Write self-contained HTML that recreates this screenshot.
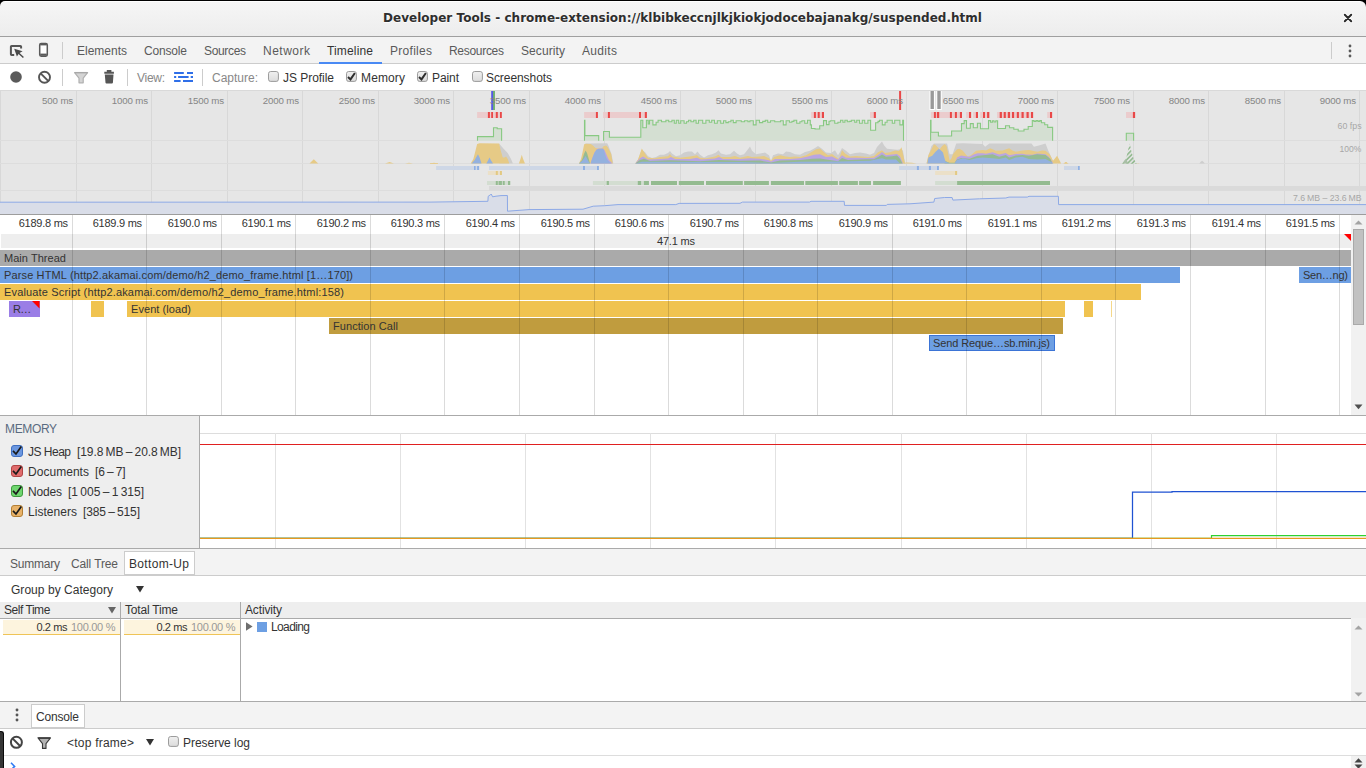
<!DOCTYPE html><html lang="en"><head><meta charset="utf-8"><title>Developer Tools</title><style>
*{box-sizing:border-box;margin:0;padding:0}
html,body{width:1366px;height:768px;overflow:hidden;background:#fff}
body{position:relative;font-family:"Liberation Sans","DejaVu Sans",sans-serif;font-size:12px;color:#333;-webkit-font-smoothing:antialiased}
.a{position:absolute;white-space:nowrap}
.t{position:absolute;white-space:nowrap;line-height:14px;height:14px}
svg{position:absolute;overflow:visible}
</style></head><body>
<div class="a" style="left:0;top:0;width:1366px;height:37px;background:#000"></div>
<div class="a" style="left:0;top:1px;width:1366px;height:35px;border-radius:5px 6px 0 0;background:linear-gradient(#fff 0,#fff 1px,#f5f5f5 1px,#f4f4f4 7px,#ededed 34px)"></div>
<div class="a" style="left:0;top:36px;width:1366px;height:1px;background:#9f9f9f"></div>
<div class="t" style="left:383px;top:10px;text-shadow:0 1px 0 rgba(255,255,255,0.85);font-family:'DejaVu Sans','Liberation Sans',sans-serif;font-weight:bold;font-size:12px;letter-spacing:0.028px;line-height:16px;height:16px;color:#2e2e2e">Developer Tools - chrome-extension://klbibkeccnjlkjkiokjodocebajanakg/suspended.html</div>
<svg style="left:1342px;top:12px" width="12" height="12" viewBox="1342 12 12 12"><path d="M1344.8 14.8L1351.2 21.2M1351.2 14.8L1344.8 21.2" stroke="#fff" stroke-width="3.8" stroke-linecap="round" fill="none" opacity="0.9"/><path d="M1344.8 14.8L1351.2 21.2M1351.2 14.8L1344.8 21.2" stroke="#2a2a2a" stroke-width="2" stroke-linecap="round" fill="none"/></svg>
<div class="a" style="left:0;top:37px;width:1366px;height:27px;background:#f3f3f3;border-bottom:1px solid #ccc"></div>
<svg style="left:0;top:36px" width="30" height="28" viewBox="0 36 30 28"><path d="M14.2 54.9H11.6Q10.9 54.9 10.9 54.2V46.6Q10.9 45.9 11.6 45.9H20.4Q21.1 45.9 21.1 46.6V48.6" fill="none" stroke="#555" stroke-width="2" /><path d="M14.2 48.8L22.6 51.3L19.6 52.9L23.9 57.1L22.9 58.1L18.6 53.9L16.9 56.4Z" fill="#4a4a4a"/></svg>
<svg style="left:38px;top:42px" width="11" height="16" viewBox="0 0 11 16"><rect x="1.7" y="1.6" width="7.6" height="12.6" rx="1.4" fill="#fff" stroke="#5a5a5a" stroke-width="1.5"/><rect x="2.2" y="1.8" width="6.6" height="1.6" fill="#5a5a5a"/><rect x="2.2" y="11.6" width="6.6" height="2.2" fill="#5a5a5a"/></svg>
<div class="a" style="left:62px;top:42px;width:1px;height:17px;background:#ccc"></div>
<div class="t" style="left:77px;top:44px;color:#5a5a5a;line-height:14px;height:14px;letter-spacing:-0.004px;">Elements</div>
<div class="t" style="left:144px;top:44px;color:#5a5a5a;line-height:14px;height:14px;letter-spacing:-0.172px;">Console</div>
<div class="t" style="left:204px;top:44px;color:#5a5a5a;line-height:14px;height:14px;letter-spacing:-0.339px;">Sources</div>
<div class="t" style="left:263px;top:44px;color:#5a5a5a;line-height:14px;height:14px;letter-spacing:0.497px;">Network</div>
<div class="t" style="left:327px;top:44px;color:#333;line-height:14px;height:14px;letter-spacing:0.156px;">Timeline</div>
<div class="t" style="left:390px;top:44px;color:#5a5a5a;line-height:14px;height:14px;letter-spacing:0.283px;">Profiles</div>
<div class="t" style="left:449px;top:44px;color:#5a5a5a;line-height:14px;height:14px;letter-spacing:-0.295px;">Resources</div>
<div class="t" style="left:521px;top:44px;color:#5a5a5a;line-height:14px;height:14px;letter-spacing:0.092px;">Security</div>
<div class="t" style="left:582px;top:44px;color:#5a5a5a;line-height:14px;height:14px;letter-spacing:0.328px;">Audits</div>
<div class="a" style="left:319px;top:62px;width:63px;height:2px;background:#4a8af4"></div>
<div class="a" style="left:1331px;top:42px;width:1px;height:17px;background:#ccc"></div>
<svg style="left:1348.4px;top:43.5px" width="4" height="14" viewBox="0 0 4 14"><circle cx="2" cy="2" r="1.4" fill="#5a5a5a"/><circle cx="2" cy="7" r="1.4" fill="#5a5a5a"/><circle cx="2" cy="12" r="1.4" fill="#5a5a5a"/></svg>
<div class="a" style="left:0;top:64px;width:1366px;height:26px;background:#fff"></div>
<svg style="left:0;top:64px" width="230" height="26" viewBox="0 64 230 26"><circle cx="16" cy="77" r="5.8" fill="#5a5a5a"/><circle cx="44.5" cy="77.3" r="5.5" fill="none" stroke="#555" stroke-width="1.9"/><path d="M40.6 73.4L48.4 81.2" stroke="#555" stroke-width="1.9"/><path d="M74.6 72.6H87.6L83.2 78.2V82.8H79V78.2Z" fill="#d4d4d4" stroke="#b0b0b0" stroke-width="1.2" stroke-linejoin="round"/><path d="M74.6 72.6H87.6" stroke="#a8a8a8" stroke-width="1.3"/><path d="M104.8 74.6H113.5L112.9 82.8Q112.8 83.6 112 83.6H106.4Q105.6 83.6 105.5 82.8ZM104.3 71.8H113.9V73.8H104.3ZM106.8 70.1H111.4V72H106.8Z" fill="#555"/><path d="M174.1 73H183.8M187 73H193M174.1 77H176.2M178.1 77H188.6M190.7 77H193M174.1 81H180.6M183 81H193" stroke="#2f6fe8" stroke-width="1.8" fill="none"/></svg>
<div class="a" style="left:62px;top:69px;width:1px;height:17px;background:#ccc"></div>
<div class="a" style="left:127px;top:69px;width:1px;height:17px;background:#ccc"></div>
<div class="a" style="left:202px;top:69px;width:1px;height:17px;background:#ccc"></div>
<div class="t" style="left:137px;top:71px;color:#888;line-height:14px;height:14px;letter-spacing:-0.285px;">View:</div>
<div class="t" style="left:212px;top:71px;color:#888;line-height:14px;height:14px;letter-spacing:-0.004px;">Capture:</div>
<svg width="0" height="0" style="left:0;top:0"><defs><linearGradient id="cbg" x1="0" y1="0" x2="0" y2="1"><stop offset="0" stop-color="#f0f0f0"/><stop offset="1" stop-color="#dcdcdc"/></linearGradient></defs></svg>
<svg style="left:268.2px;top:71.1px" width="11.9" height="12.9" viewBox="0 0 11.9 12.9"><rect x="0.5" y="1.2" width="9.9" height="9.9" rx="2.2" fill="#c8c8c8" opacity="0.5"/><rect x="0.5" y="0.5" width="9.9" height="9.9" rx="2.2" fill="url(#cbg)" stroke="#9c9c9c" stroke-width="1"/></svg>
<div class="t" style="left:283px;top:71px;color:#333;line-height:14px;height:14px;letter-spacing:-0.040px;">JS Profile</div>
<svg style="left:346.4px;top:71.1px" width="11.9" height="12.9" viewBox="0 0 11.9 12.9"><rect x="0.5" y="1.2" width="9.9" height="9.9" rx="2.2" fill="#c8c8c8" opacity="0.5"/><rect x="0.5" y="0.5" width="9.9" height="9.9" rx="2.2" fill="url(#cbg)" stroke="#9c9c9c" stroke-width="1"/><path d="M2 6L4.5 8.4L8.9 2" fill="none" stroke="#2e2e2e" stroke-width="2"/></svg>
<div class="t" style="left:361px;top:71px;color:#333;line-height:14px;height:14px;letter-spacing:0.131px;">Memory</div>
<svg style="left:417.4px;top:71.1px" width="11.9" height="12.9" viewBox="0 0 11.9 12.9"><rect x="0.5" y="1.2" width="9.9" height="9.9" rx="2.2" fill="#c8c8c8" opacity="0.5"/><rect x="0.5" y="0.5" width="9.9" height="9.9" rx="2.2" fill="url(#cbg)" stroke="#9c9c9c" stroke-width="1"/><path d="M2 6L4.5 8.4L8.9 2" fill="none" stroke="#2e2e2e" stroke-width="2"/></svg>
<div class="t" style="left:432px;top:71px;color:#333;line-height:14px;height:14px;letter-spacing:-0.090px;">Paint</div>
<svg style="left:471.6px;top:71.1px" width="11.9" height="12.9" viewBox="0 0 11.9 12.9"><rect x="0.5" y="1.2" width="9.9" height="9.9" rx="2.2" fill="#c8c8c8" opacity="0.5"/><rect x="0.5" y="0.5" width="9.9" height="9.9" rx="2.2" fill="url(#cbg)" stroke="#9c9c9c" stroke-width="1"/></svg>
<div class="t" style="left:486px;top:71px;color:#333;line-height:14px;height:14px;letter-spacing:-0.070px;">Screenshots</div>
<div class="a" style="left:0;top:90px;width:1366px;height:125px;background:#e6e6e6"></div>
<svg style="left:0;top:90px" width="1366" height="125" viewBox="0 90 1366 125">
<rect x="0.0" y="90" width="1" height="124" fill="#d8d8d8"/>
<rect x="76.0" y="90" width="1" height="124" fill="#d8d8d8"/>
<rect x="151.0" y="90" width="1" height="124" fill="#d8d8d8"/>
<rect x="227.0" y="90" width="1" height="124" fill="#d8d8d8"/>
<rect x="302.0" y="90" width="1" height="124" fill="#d8d8d8"/>
<rect x="378.0" y="90" width="1" height="124" fill="#d8d8d8"/>
<rect x="453.0" y="90" width="1" height="124" fill="#d8d8d8"/>
<rect x="529.0" y="90" width="1" height="124" fill="#d8d8d8"/>
<rect x="604.0" y="90" width="1" height="124" fill="#d8d8d8"/>
<rect x="680.0" y="90" width="1" height="124" fill="#d8d8d8"/>
<rect x="755.0" y="90" width="1" height="124" fill="#d8d8d8"/>
<rect x="831.0" y="90" width="1" height="124" fill="#d8d8d8"/>
<rect x="906.0" y="90" width="1" height="124" fill="#d8d8d8"/>
<rect x="982.0" y="90" width="1" height="124" fill="#d8d8d8"/>
<rect x="1057.0" y="90" width="1" height="124" fill="#d8d8d8"/>
<rect x="1133.0" y="90" width="1" height="124" fill="#d8d8d8"/>
<rect x="1208.0" y="90" width="1" height="124" fill="#d8d8d8"/>
<rect x="1284.0" y="90" width="1" height="124" fill="#d8d8d8"/>
<rect x="1359.0" y="90" width="1" height="124" fill="#d8d8d8"/>
<rect x="0" y="140" width="1366" height="1" fill="#dddddd"/>
<rect x="0" y="163" width="1366" height="1" fill="#dddddd"/>
<rect x="0" y="190" width="1366" height="1" fill="#dddddd"/>
<rect x="489" y="186" width="877" height="4.5" fill="#dadada"/>
<polygon points="0,214 0,202.2 430,202.1 487.9,201.3 488.2,196.3 490.4,194.8 491.2,194.0 492.6,196.8 496,196.2 501,195.6 507.4,195.5 507.5,211.2 529,209.6 583,209.2 593.2,206.2 604.7,205.7 618,204.6 675.8,204.6 679.1,203.4 740,203.3 742.5,202.1 809.5,202.1 811,201.3 844.2,201.3 844.5,205.4 886.4,205.4 887.2,204.4 910,203.8 933.9,202.1 934.7,198.5 944.6,197.5 952.1,197.5 952.9,200.1 979.4,198.8 1005.8,198 1009,197.1 1027.3,197.1 1029,196.3 1058.4,196.3 1058.6,204.6 1366,204.6 1366,214" fill="#d9dde8"/>
<polyline points="0,202.2 430,202.1 487.9,201.3 488.2,196.3 490.4,194.8 491.2,194.0 492.6,196.8 496,196.2 501,195.6 507.4,195.5 507.5,211.2 529,209.6 583,209.2 593.2,206.2 604.7,205.7 618,204.6 675.8,204.6 679.1,203.4 740,203.3 742.5,202.1 809.5,202.1 811,201.3 844.2,201.3 844.5,205.4 886.4,205.4 887.2,204.4 910,203.8 933.9,202.1 934.7,198.5 944.6,197.5 952.1,197.5 952.9,200.1 979.4,198.8 1005.8,198 1009,197.1 1027.3,197.1 1029,196.3 1058.4,196.3 1058.6,204.6 1366,204.6" fill="none" stroke="#8da9e6" stroke-width="1"/>
<rect x="477.1" y="112" width="24.7" height="6" fill="#ebcccd"/>
<rect x="584.1" y="112" width="13.8" height="6" fill="#ebcccd"/>
<rect x="603.1" y="112" width="43.8" height="6" fill="#ebcccd"/>
<rect x="811.1" y="112" width="12.9" height="6" fill="#ebcccd"/>
<rect x="870" y="112" width="5.9" height="6" fill="#ebcccd"/>
<rect x="930.9" y="112" width="31.1" height="6" fill="#ebcccd"/>
<rect x="966.1" y="112" width="5.0" height="6" fill="#ebcccd"/>
<rect x="973.1" y="112" width="4.9" height="6" fill="#ebcccd"/>
<rect x="980.2" y="112" width="9.1" height="6" fill="#ebcccd"/>
<rect x="997" y="112" width="36.1" height="6" fill="#ebcccd"/>
<rect x="1047.2" y="112" width="4.9" height="6" fill="#ebcccd"/>
<rect x="1126" y="112" width="9.1" height="6" fill="#ebcccd"/>
<rect x="487.9" y="112" width="2.0" height="6" fill="#e94848"/>
<rect x="491.2" y="112" width="1.8" height="6" fill="#e94848"/>
<rect x="495.8" y="112" width="2.0" height="6" fill="#e94848"/>
<rect x="500" y="112" width="1.8" height="6" fill="#e94848"/>
<rect x="595.9" y="112" width="2.0" height="6" fill="#e94848"/>
<rect x="607.9" y="112" width="2.0" height="6" fill="#e94848"/>
<rect x="639" y="112" width="2" height="6" fill="#e94848"/>
<rect x="644.8" y="112" width="2.1" height="6" fill="#e94848"/>
<rect x="813.9" y="112" width="2.0" height="6" fill="#e94848"/>
<rect x="817.7" y="112" width="2.0" height="6" fill="#e94848"/>
<rect x="821.9" y="112" width="2.1" height="6" fill="#e94848"/>
<rect x="873.8" y="112" width="2.1" height="6" fill="#e94848"/>
<rect x="933.9" y="112" width="2.0" height="6" fill="#e94848"/>
<rect x="936.9" y="112" width="2.3" height="6" fill="#e94848"/>
<rect x="949.9" y="112" width="2.0" height="6" fill="#e94848"/>
<rect x="954.9" y="112" width="2.0" height="6" fill="#e94848"/>
<rect x="959.9" y="112" width="2.1" height="6" fill="#e94848"/>
<rect x="969" y="112" width="2.1" height="6" fill="#e94848"/>
<rect x="975.9" y="112" width="2.1" height="6" fill="#e94848"/>
<rect x="983" y="112" width="2" height="6" fill="#e94848"/>
<rect x="987.1" y="112" width="2.2" height="6" fill="#e94848"/>
<rect x="999.7" y="112" width="2.2" height="6" fill="#e94848"/>
<rect x="1003.7" y="112" width="2.1" height="6" fill="#e94848"/>
<rect x="1007.8" y="112" width="2.2" height="6" fill="#e94848"/>
<rect x="1012" y="112" width="2.1" height="6" fill="#e94848"/>
<rect x="1016.8" y="112" width="2.1" height="6" fill="#e94848"/>
<rect x="1021.5" y="112" width="2.2" height="6" fill="#e94848"/>
<rect x="1026.5" y="112" width="2.2" height="6" fill="#e94848"/>
<rect x="1031" y="112" width="2.1" height="6" fill="#e94848"/>
<rect x="1050" y="112" width="2.1" height="6" fill="#e94848"/>
<rect x="1132.9" y="112" width="2.2" height="6" fill="#e94848"/>
<path d="M477.5,140.8V136.6H493.5V127.8H497.2V128.8H501.6V140.8Z" fill="#d4dfd2" stroke="none"/>
<path d="M477.5,140.8V136.6H493.5V127.8H497.2V128.8H501.6V140.8" fill="none" stroke="#88c982" stroke-width="1.1"/>
<path d="M584.5,140.8V120.2H584.9V135.6H598.7V140.8Z" fill="#d4dfd2" stroke="none"/>
<path d="M584.5,140.8V120.2H584.9V135.6H598.7V140.8" fill="none" stroke="#88c982" stroke-width="1.1"/>
<path d="M603.6,140.8V131.5H609.4V137.3H640.8V120.2H642.8V127.7H646.4V120.2H648.2V124.0H649.5V120.3H652.9V124.9H656.1V122.2H658.1V120.3H661.5V121.8H663.9V121.8H665.9V120.3H668.7V121.8H671.9V120.3H674.3V123.2H676.3V120.3H678.7V123.2H680.7V120.8H684.1V123.2H686.5V121.8H688.5V120.3H690.9V121.8H693.7V120.3H696.1V123.2H698.5V120.3H702.7V123.2H705.9V120.3H709.3V122.2H711.7V120.3H714.5V123.2H717.3V120.8H720.7V123.2H723.5V120.8H725.9V122.6H728.3V121.8H730.9V120.3H733.3V122.6H736.1V120.8H741.3V121.8H744.5V120.8H747.9V121.8H749.9V120.8H753.3V124.9H756.1V120.3H759.5V122.6H762.7V121.4H765.3V120.3H767.7V122.2H770.5V120.8H774.7V121.8H777.9V121.8H780.5V120.8H783.3V124.9H786.1V120.8H789.5V122.2H791.9V121.4H793.9V120.3H796.7V123.2H799.9V121.8H801.9V120.8H804.7V123.2H807.5V120.3H810.3V124.9H811.4V128.5H815V129.0H819.7V125.7H823.5V120.6H826.5V124.6H829V121.2H830.5V120.8H834.7V123.2H837.9V122.2H840.5V120.3H842.9V122.2H844.9V120.3H847.3V121.8H849.3V121.4H851.3V120.3H854.7V122.2H856.7V120.3H859.5V123.2H862.3V120.3H864.7V123.2H867.9V120.3H870.6V130.2H875.6V122.8H878V121.4H879.5V120.3H882.3V124.9H885.1V122.2H887.1V120.3H892.3V123.2H894.7V120.3H899.9V124.9H902.7V120.3H903.5V140.8Z" fill="#d4dfd2" stroke="none"/>
<path d="M603.6,140.8V131.5H609.4V137.3H640.8V120.2H642.8V127.7H646.4V120.2H648.2V124.0H649.5V120.3H652.9V124.9H656.1V122.2H658.1V120.3H661.5V121.8H663.9V121.8H665.9V120.3H668.7V121.8H671.9V120.3H674.3V123.2H676.3V120.3H678.7V123.2H680.7V120.8H684.1V123.2H686.5V121.8H688.5V120.3H690.9V121.8H693.7V120.3H696.1V123.2H698.5V120.3H702.7V123.2H705.9V120.3H709.3V122.2H711.7V120.3H714.5V123.2H717.3V120.8H720.7V123.2H723.5V120.8H725.9V122.6H728.3V121.8H730.9V120.3H733.3V122.6H736.1V120.8H741.3V121.8H744.5V120.8H747.9V121.8H749.9V120.8H753.3V124.9H756.1V120.3H759.5V122.6H762.7V121.4H765.3V120.3H767.7V122.2H770.5V120.8H774.7V121.8H777.9V121.8H780.5V120.8H783.3V124.9H786.1V120.8H789.5V122.2H791.9V121.4H793.9V120.3H796.7V123.2H799.9V121.8H801.9V120.8H804.7V123.2H807.5V120.3H810.3V124.9H811.4V128.5H815V129.0H819.7V125.7H823.5V120.6H826.5V124.6H829V121.2H830.5V120.8H834.7V123.2H837.9V122.2H840.5V120.3H842.9V122.2H844.9V120.3H847.3V121.8H849.3V121.4H851.3V120.3H854.7V122.2H856.7V120.3H859.5V123.2H862.3V120.3H864.7V123.2H867.9V120.3H870.6V130.2H875.6V122.8H878V121.4H879.5V120.3H882.3V124.9H885.1V122.2H887.1V120.3H892.3V123.2H894.7V120.3H899.9V124.9H902.7V120.3H903.5V140.8" fill="none" stroke="#88c982" stroke-width="1.1"/>
<path d="M930.6,140.8V120.2H931V132.3H938.4V136H951.6V131H961.5V123.6H964.2V120.6H966.5V128.2H970.3V123.6H973.3V127.7H977.4V123.2H980.5V128.7H988.5V120.6H990.6V122.2H992.4V120.8H994V122.0H995.8V120.8H997.6V128.5H1005.5V125.7H1009.5V127.7H1013.8V129.3H1018.2V131H1024V129.3H1028.2V126.5H1032.3V120.6H1034V121.4H1036V120.6H1038V121.4H1039.8V120.6H1041.4V122.7H1044.7V124.7H1047.7V127.4H1052.6V140.8Z" fill="#d4dfd2" stroke="none"/>
<path d="M930.6,140.8V120.2H931V132.3H938.4V136H951.6V131H961.5V123.6H964.2V120.6H966.5V128.2H970.3V123.6H973.3V127.7H977.4V123.2H980.5V128.7H988.5V120.6H990.6V122.2H992.4V120.8H994V122.0H995.8V120.8H997.6V128.5H1005.5V125.7H1009.5V127.7H1013.8V129.3H1018.2V131H1024V129.3H1028.2V126.5H1032.3V120.6H1034V121.4H1036V120.6H1038V121.4H1039.8V120.6H1041.4V122.7H1044.7V124.7H1047.7V127.4H1052.6V140.8" fill="none" stroke="#88c982" stroke-width="1.1"/>
<path d="M1126.3,140.8V133.3H1133.6V140.8Z" fill="#d4dfd2" stroke="none"/>
<path d="M1126.3,140.8V133.3H1133.6V140.8" fill="none" stroke="#88c982" stroke-width="1.1"/>
<polygon points="309.5,163.6 309.5,163.6 313.8,159.2 318.2,163.6 318.2,163.6" fill="#e6ca86"/>
<polygon points="385,163.6 385,163.6 389.6,162 394,163.6 394,163.6" fill="#e6ca86"/>
<polygon points="405,163.6 405,163.6 409,162.8 413,163.6 413,163.6" fill="#e6ca86"/>
<polygon points="430,163.6 430,163.6 434,162.8 438,163.6 438,163.6" fill="#e6ca86"/>
<polygon points="499.13,163.6 499.13,143.4 503.59,148.86 507.72,152.99 511.03,159.11 513.02,163.74 513.02,163.6" fill="#cecece"/>
<polygon points="470.52,163.6 470.52,163.74 473.33,159.11 475.48,150.84 477.13,143.9 479.61,143.23 499.13,143.56 500.78,150.84 502.76,157.46 504.42,157.46 506.07,156.46 507.72,159.11 509.38,163.74 509.38,163.6" fill="#e6ca86"/>
<polygon points="471.34,163.6 471.34,163.74 474.65,159.94 477.96,154.15 479.61,157.46 481.6,163.74 481.6,163.6" fill="#94b1de"/>
<polygon points="486.23,163.6 486.23,163.74 487.88,160.76 489.53,157.46 491.19,160.76 493.17,163.74 493.17,163.6" fill="#94b1de"/>
<polygon points="518.8,163.6 518.8,163.74 520.46,159.11 521.78,154.64 523.1,159.11 525.09,163.74 525.09,163.6" fill="#e6ca86"/>
<polygon points="584.5,163.6 584.5,144.2 586,143.4 607.2,143.3 608.6,146 610,150 611.5,154 613.3,163.6 613.3,163.6" fill="#cecece"/>
<polygon points="579,163.6 579,163.6 581,159 582.6,152 584.1,144.6 585.5,143.8 590.7,144 593,145.5 595.5,148 598,148.6 602,148.2 603.5,146.2 606.1,145.4 607.6,147 609.2,150 611.2,154 612.8,163.6 612.8,163.6" fill="#e6ca86"/>
<polygon points="590.5,163.6 590.5,163.6 592.5,157.5 594.5,152.5 596.5,149.5 598.5,148.6 603,148.4 604.5,150 606,153.5 607.5,157 609,160 611,162 612.5,163.6 612.5,163.6" fill="#b9a5e2"/>
<polygon points="579,163.6 579,163.6 582,160 584,154 585.6,150.5 587,153 588.5,158 590,163.6 590,163.6" fill="#95bb92"/>
<polygon points="579,163.6 579,163.6 582,161 584.3,158 585.6,156.1 587,158.5 588.6,161.5 590,163.6 590,163.6" fill="#94b1de"/>
<polygon points="590.5,163.6 590.5,163.6 592.5,157.8 594.5,152.8 596.5,149.8 598.5,148.9 603,148.7 604,150.5 605,154 606,157.5 607.5,160 609.5,162.3 611,163.6 611,163.6" fill="#94b1de"/>
<polygon points="635.3,163.6 635.3,163.6 638,159.64 641.5,150.29 645,151.94 648,156.34 652,157.99 656,156.89 660,154.69 664,154.69 668,153.04 670,151.06 672,153.59 676,156.34 680,155.24 684,152.49 688,151.39 692,151.39 695,154.14 697.5,151.39 700,154.69 704,157.44 708,155.24 712,154.14 716,152.49 718.5,150.29 721,153.59 726,154.69 730,154.14 734,150.84 737,153.59 740,155.24 744,154.14 748,149.19 750,146.44 752,150.84 756,154.14 760,153.59 765,152.49 769,155.24 771,160.74 773,155.24 778,153.59 783,154.14 786,151.39 790,151.94 795,154.14 800,154.69 805,151.94 810,150.84 815,148.09 818,145.89 822,148.64 826,152.49 831,153.04 835,150.29 838,155.24 840,151.94 842,148.09 846,150.84 850,154.14 855,153.04 860,152.49 866,153.59 870,154.69 874,153.04 877,146.99 880,143.69 882,141.49 884,145.34 887,148.64 892,149.19 897,149.74 901,149.19 903,150.84 905,163.6 905,163.6" fill="#cecece"/>
<polygon points="635.3,163.6 635.3,163.6 638,159.52 641.8,148.48 645,153.52 648,157.72 655,158.32 660,157.12 668,156.16 670,154.12 672,156.52 680,157.72 690,156.52 697,155.32 700,157.72 706,158.32 715,156.52 718.5,154.72 721,157.12 730,157.12 735,155.92 740,157.72 748,155.92 752,157.12 760,156.52 764,155.92 769,158.32 771,160.72 774,157.12 780,155.32 786,156.52 790,157.12 795,156.52 800,157.12 806,155.32 812,151.72 816,149.32 820,148.48 824,152.32 828,155.32 832,154.12 836,157.12 839,158.92 842,149.92 845,153.52 850,156.52 856,155.92 862,156.52 868,157.12 874,155.92 878,152.32 882,150.16 885,152.92 890,152.32 895,150.52 899,151.12 901.5,147.28 903.5,155.92 905,163.6 905,163.6" fill="#e6ca86"/>
<polygon points="635.3,163.6 635.3,163.6 640,158.35 643,156.48 648,159.6 660,158.98 668,158.6 671,157.1 675,158.98 690,158.98 697,157.73 701,159.6 715,158.6 719,157.1 723,158.98 740,158.98 750,158.35 760,158.73 769,160.23 771,161.48 775,158.98 790,158.98 800,158.35 808,156.48 814,154.85 820,154.35 826,157.1 832,156.48 838,159.6 842,155.23 846,157.73 856,157.73 866,158.1 874,157.73 879,154.6 882,152.1 886,155.23 892,154.6 897,153.98 900,156.48 903,163.6 903,163.6" fill="#b9a5e2"/>
<polygon points="635.3,163.6 635.3,163.6 640,159.97 644,158.72 650,160.97 670,160.22 700,161.22 719,159.97 740,160.72 760,160.6 771,162.47 780,160.6 800,159.97 812,158.72 820,158.47 828,159.72 838,161.22 842,158.1 848,159.97 866,159.35 874,159.35 879,156.47 882,154.47 886,156.85 892,156.22 897,155.6 900,158.72 902.5,163.6 902.5,163.6" fill="#95bb92"/>
<polygon points="635.3,163.6 635.3,163.6 642,161.64 700,161.92 740,161.92 771,162.9 800,161.64 840,161.5 870,160.8 878,159.12 882,158.14 886,159.4 896,159.4 900,163.6 900,163.6" fill="#94b1de"/>
<polygon points="903,163.6 903,163.6 906,162.6 912,162.8 916.5,163.6 916.5,163.6" fill="#e6ca86"/>
<polygon points="926.46,163.6 926.46,163.74 928.94,154.15 931.42,145.88 933.9,143.4 947.13,143.4 949.61,154.15 952.59,154.15 956.23,143.56 962.84,143.23 982.69,143.9 985.17,146.71 989.3,143.4 1031.47,143.4 1033.95,146.71 1038.91,145.55 1045.53,143.4 1048.01,150.01 1052.14,159.11 1053.8,163.74 1053.8,163.6" fill="#cecece"/>
<polygon points="926.46,163.6 926.46,163.74 928.44,154.98 931.09,150.01 933.9,144.23 935.55,145.05 939.69,149.19 942.17,145.88 944.65,143.9 946.63,145.88 949.61,160.76 951.6,158.28 952.92,154.15 957.05,149.19 959.53,148.86 962.84,150.84 967.8,156.63 971.11,154.98 976.07,150.84 982.69,150.01 985.99,150.51 990.13,148.36 995.92,150.84 1002.53,150.51 1009.15,148.36 1012.45,150.51 1015.76,151.67 1022.37,150.51 1028.99,150.01 1037.26,151.67 1042.22,150.51 1045.53,150.84 1049.66,154.15 1052.97,160.76 1055.12,158.28 1057.1,155.8 1059.09,159.44 1061.24,163.74 1061.24,163.6" fill="#e6ca86"/>
<polygon points="954.57,163.6 954.57,163.74 957.05,157.46 961.19,155.47 965.32,156.3 969.46,156.79 973.59,154.48 977.72,153.16 982.69,153.16 985.99,153.65 992.61,152.33 999.22,154.48 1005.84,152.99 1009.15,155.31 1015.76,153.98 1022.37,153.65 1025.68,154.48 1032.3,154.64 1037.26,153.49 1045.53,154.15 1048.83,156.63 1052.14,161.59 1052.97,163.74 1052.97,163.6" fill="#b9a5e2"/>
<polygon points="944.32,163.6 944.32,163.74 945.48,160.76 947.13,162.09 949.61,162.75 954.57,162.75 957.05,159.44 961.19,157.95 969.46,158.78 977.72,155.8 985.99,154.98 992.61,154.15 999.22,156.63 1005.84,154.98 1009.15,157.46 1015.76,155.47 1022.37,154.98 1028.99,155.8 1037.26,154.15 1045.53,154.98 1050.49,159.11 1052.47,163.74 1052.47,163.6" fill="#95bb92"/>
<polygon points="927.29,163.6 927.29,163.74 928.44,157.46 932.25,155.8 935.55,151.67 938.86,148.86 941.01,150.51 943.0,152.49 944.32,157.46 945.48,161.59 949.61,163.24 954.57,163.24 957.05,159.94 962.84,158.28 969.46,159.94 976.07,158.28 982.69,157.46 992.61,158.28 999.22,159.11 1005.84,157.46 1009.15,159.94 1015.76,157.46 1022.37,156.63 1028.99,159.11 1037.26,159.44 1045.53,159.11 1052.14,162.42 1052.97,163.74 1052.97,163.6" fill="#94b1de"/>
<polygon points="1063.72,163.6 1063.72,163.74 1066.2,161.92 1068.68,163.74 1068.68,163.6" fill="#e6ca86"/>
<polygon points="1063.15,163.6 1063.15,163.74 1065.63,162.09 1068.44,163.74 1068.44,163.6" fill="#e6ca86"/>
<defs><pattern id="hatch" width="3.2" height="3.2" patternUnits="userSpaceOnUse" patternTransform="rotate(-45)"><rect width="3.2" height="1.7" fill="#95bb92"/></pattern></defs>
<polygon points="1122.19,163.74 1125.99,159.11 1128.47,148.36 1129.8,143.4 1131.28,150.84 1133.43,158.28 1136.74,163.74" fill="url(#hatch)"/>
<polygon points="1122.19,163.6 1122.19,163.74 1124.34,160.43 1125.99,158.78 1127.32,161.59 1128.47,163.74 1128.47,163.6" fill="#a9bfa6"/>
<polygon points="1136.74,163.6 1136.74,163.74 1137.9,163.08 1140.05,163.74 1140.05,163.6" fill="#e6ca86"/>
<polygon points="1199.09,163.6 1199.09,163.74 1200.74,161.76 1202.06,160.76 1203.39,161.76 1205.04,163.74 1205.04,163.6" fill="#cecece"/>
<rect x="430" y="163" width="8" height="0.8" fill="#e6ca86"/>
<rect x="436.1" y="166" width="43.0" height="4" fill="#ced7e6"/>
<rect x="489" y="166" width="109.9" height="4" fill="#ced7e6"/>
<rect x="899.1" y="166" width="39.8" height="4" fill="#ced7e6"/>
<rect x="1064" y="166" width="15.7" height="4" fill="#ced7e6"/>
<rect x="474" y="166" width="1.6" height="4" fill="#8fb0e3"/>
<rect x="477.1" y="166" width="2.0" height="4" fill="#8fb0e3"/>
<rect x="583" y="166" width="2" height="4" fill="#8fb0e3"/>
<rect x="597" y="166" width="1.9" height="4" fill="#8fb0e3"/>
<rect x="916.9" y="166" width="2.0" height="4" fill="#8fb0e3"/>
<rect x="928.9" y="166" width="2.0" height="4" fill="#8fb0e3"/>
<rect x="937" y="166" width="1.9" height="4" fill="#8fb0e3"/>
<rect x="1078" y="166" width="1.7" height="4" fill="#8fb0e3"/>
<rect x="487.9" y="171" width="14.0" height="4" fill="#ebe0c8"/>
<rect x="935.1" y="171" width="22.0" height="4" fill="#ebe0c8"/>
<rect x="495.8" y="171" width="2.0" height="4" fill="#e3c982"/>
<rect x="500" y="171" width="1.9" height="4" fill="#e3c982"/>
<rect x="955.1" y="171" width="2.0" height="4" fill="#e3c982"/>
<rect x="487" y="181" width="23.2" height="4" fill="#d3ddd1"/>
<rect x="592.9" y="181" width="56.0" height="4" fill="#d3ddd1"/>
<rect x="935.1" y="181" width="22.0" height="4" fill="#d3ddd1"/>
<rect x="495.8" y="181" width="2.0" height="4" fill="#94bb90"/>
<rect x="498.6" y="181" width="3.3" height="4" fill="#94bb90"/>
<rect x="502.8" y="181" width="1.9" height="4" fill="#94bb90"/>
<rect x="508" y="181" width="2.2" height="4" fill="#94bb90"/>
<rect x="606.7" y="181" width="2.2" height="4" fill="#94bb90"/>
<rect x="637.8" y="181" width="3.3" height="4" fill="#94bb90"/>
<rect x="643.9" y="181" width="5.0" height="4" fill="#94bb90"/>
<rect x="651" y="181" width="26" height="4" fill="#94bb90"/>
<rect x="678.8" y="181" width="25.2" height="4" fill="#94bb90"/>
<rect x="706" y="181" width="36.8" height="4" fill="#94bb90"/>
<rect x="744.1" y="181" width="24.8" height="4" fill="#94bb90"/>
<rect x="770.9" y="181" width="33.1" height="4" fill="#94bb90"/>
<rect x="805.3" y="181" width="32.6" height="4" fill="#94bb90"/>
<rect x="839.2" y="181" width="18.7" height="4" fill="#94bb90"/>
<rect x="859.1" y="181" width="11.9" height="4" fill="#94bb90"/>
<rect x="873.1" y="181" width="27.8" height="4" fill="#94bb90"/>
<rect x="957.1" y="181" width="92.9" height="4" fill="#94bb90"/>
<rect x="491.2" y="91" width="2" height="19" fill="#5658e6"/><rect x="493.2" y="91" width="1.6" height="19" fill="#5aa55a"/>
<rect x="899.1" y="91" width="2" height="19" fill="#e94848"/>
<rect x="929.5" y="90.5" width="5.4" height="19.5" fill="#fff"/><rect x="930.5" y="91" width="3.4" height="18" fill="#999"/>
<rect x="936.3" y="90.5" width="5.4" height="19.5" fill="#fff"/><rect x="937.3" y="91" width="3.4" height="18" fill="#999"/>
<rect x="0" y="90" width="1366" height="1" fill="#d9d9d9"/>
<rect x="0" y="214" width="1366" height="1" fill="#9d9d9d"/>
<text x="73.1" y="103.9" text-anchor="end" font-size="9.7" letter-spacing="-0.1" fill="#858585">500 ms</text>
<text x="148.10000000000002" y="103.9" text-anchor="end" font-size="9.7" letter-spacing="-0.1" fill="#858585">1000 ms</text>
<text x="224.10000000000002" y="103.9" text-anchor="end" font-size="9.7" letter-spacing="-0.1" fill="#858585">1500 ms</text>
<text x="299.1" y="103.9" text-anchor="end" font-size="9.7" letter-spacing="-0.1" fill="#858585">2000 ms</text>
<text x="375.1" y="103.9" text-anchor="end" font-size="9.7" letter-spacing="-0.1" fill="#858585">2500 ms</text>
<text x="450.1" y="103.9" text-anchor="end" font-size="9.7" letter-spacing="-0.1" fill="#858585">3000 ms</text>
<text x="526.0999999999999" y="103.9" text-anchor="end" font-size="9.7" letter-spacing="-0.1" fill="#858585">3500 ms</text>
<text x="601.0999999999999" y="103.9" text-anchor="end" font-size="9.7" letter-spacing="-0.1" fill="#858585">4000 ms</text>
<text x="677.0999999999999" y="103.9" text-anchor="end" font-size="9.7" letter-spacing="-0.1" fill="#858585">4500 ms</text>
<text x="752.0999999999999" y="103.9" text-anchor="end" font-size="9.7" letter-spacing="-0.1" fill="#858585">5000 ms</text>
<text x="828.0999999999999" y="103.9" text-anchor="end" font-size="9.7" letter-spacing="-0.1" fill="#858585">5500 ms</text>
<text x="903.0999999999999" y="103.9" text-anchor="end" font-size="9.7" letter-spacing="-0.1" fill="#858585">6000 ms</text>
<text x="979.0999999999999" y="103.9" text-anchor="end" font-size="9.7" letter-spacing="-0.1" fill="#858585">6500 ms</text>
<text x="1054.1" y="103.9" text-anchor="end" font-size="9.7" letter-spacing="-0.1" fill="#858585">7000 ms</text>
<text x="1130.1" y="103.9" text-anchor="end" font-size="9.7" letter-spacing="-0.1" fill="#858585">7500 ms</text>
<text x="1205.1" y="103.9" text-anchor="end" font-size="9.7" letter-spacing="-0.1" fill="#858585">8000 ms</text>
<text x="1281.1" y="103.9" text-anchor="end" font-size="9.7" letter-spacing="-0.1" fill="#858585">8500 ms</text>
<text x="1356.1" y="103.9" text-anchor="end" font-size="9.7" letter-spacing="-0.1" fill="#858585">9000 ms</text>
<text x="1361.6" y="129" text-anchor="end" font-size="9.5" textLength="24" lengthAdjust="spacingAndGlyphs" fill="#a6a6a6">60 fps</text>
<text x="1361.4" y="151.9" text-anchor="end" font-size="9.5" textLength="21.8" lengthAdjust="spacingAndGlyphs" fill="#a6a6a6">100%</text>
<text x="1361.5" y="200.8" text-anchor="end" font-size="9.5" textLength="68.5" lengthAdjust="spacingAndGlyphs" fill="#a6a6a6">7.6 MB – 23.6 MB</text>
</svg>
<div class="a" style="left:0;top:215px;width:1366px;height:200px;background:#fff"></div>
<div class="a" style="left:1px;top:234px;width:1350px;height:14px;background:#eee"></div>
<div class="a" style="left:0;top:250px;width:1351px;height:16px;background:#aaa"></div>
<div class="a" style="left:0px;top:267px;width:1179.5px;height:16px;background:#6d9fe3;"></div>
<div class="a" style="left:1299px;top:267px;width:52px;height:16px;background:#6d9fe3;"></div>
<div class="a" style="left:0px;top:284px;width:1140.5px;height:16px;background:#f0c350;"></div>
<div class="a" style="left:9px;top:301px;width:30.5px;height:16px;background:#9a7ee6;"></div>
<div class="a" style="left:91px;top:301px;width:13.400000000000006px;height:16px;background:#f0c350;"></div>
<div class="a" style="left:127px;top:301px;width:938.4000000000001px;height:16px;background:#f0c350;"></div>
<div class="a" style="left:1084px;top:301px;width:8.599999999999909px;height:16px;background:#f0c350;"></div>
<div class="a" style="left:1111px;top:301px;width:0.7000000000000455px;height:16px;background:#f5d88a;"></div>
<div class="a" style="left:329px;top:318px;width:733.5px;height:16px;background:#c09c3e;"></div>
<div class="a" style="left:929px;top:335px;width:125.5px;height:16px;background:#6d9fe3;border:1px solid #3b74d6;"></div>
<svg style="left:32px;top:301px" width="8" height="8" viewBox="0 0 8 8"><path d="M0 0H7.5V7.5Z" fill="#f00"/></svg>
<svg style="left:1344px;top:234px" width="8" height="8" viewBox="0 0 8 8"><path d="M0 0H7V7Z" fill="#f00"/></svg>
<div class="a" style="left:72px;top:215px;width:1px;height:200px;background:rgba(0,0,0,0.14)"></div>
<div class="a" style="left:146px;top:215px;width:1px;height:200px;background:rgba(0,0,0,0.14)"></div>
<div class="a" style="left:221px;top:215px;width:1px;height:200px;background:rgba(0,0,0,0.14)"></div>
<div class="a" style="left:295px;top:215px;width:1px;height:200px;background:rgba(0,0,0,0.14)"></div>
<div class="a" style="left:370px;top:215px;width:1px;height:200px;background:rgba(0,0,0,0.14)"></div>
<div class="a" style="left:444px;top:215px;width:1px;height:200px;background:rgba(0,0,0,0.14)"></div>
<div class="a" style="left:519px;top:215px;width:1px;height:200px;background:rgba(0,0,0,0.14)"></div>
<div class="a" style="left:594px;top:215px;width:1px;height:200px;background:rgba(0,0,0,0.14)"></div>
<div class="a" style="left:668px;top:215px;width:1px;height:200px;background:rgba(0,0,0,0.14)"></div>
<div class="a" style="left:743px;top:215px;width:1px;height:200px;background:rgba(0,0,0,0.14)"></div>
<div class="a" style="left:817px;top:215px;width:1px;height:200px;background:rgba(0,0,0,0.14)"></div>
<div class="a" style="left:892px;top:215px;width:1px;height:200px;background:rgba(0,0,0,0.14)"></div>
<div class="a" style="left:966px;top:215px;width:1px;height:200px;background:rgba(0,0,0,0.14)"></div>
<div class="a" style="left:1041px;top:215px;width:1px;height:200px;background:rgba(0,0,0,0.14)"></div>
<div class="a" style="left:1115px;top:215px;width:1px;height:200px;background:rgba(0,0,0,0.14)"></div>
<div class="a" style="left:1190px;top:215px;width:1px;height:200px;background:rgba(0,0,0,0.14)"></div>
<div class="a" style="left:1265px;top:215px;width:1px;height:200px;background:rgba(0,0,0,0.14)"></div>
<div class="a" style="left:1339px;top:215px;width:1px;height:200px;background:rgba(0,0,0,0.14)"></div>
<div class="t" style="left:18.699999999999996px;top:216px;font-size:11px;color:#333;line-height:14px;height:14px;letter-spacing:-0.247px;">6189.8 ms</div>
<div class="t" style="left:92.69999999999999px;top:216px;font-size:11px;color:#333;line-height:14px;height:14px;letter-spacing:-0.247px;">6189.9 ms</div>
<div class="t" style="left:167.7px;top:216px;font-size:11px;color:#333;line-height:14px;height:14px;letter-spacing:-0.247px;">6190.0 ms</div>
<div class="t" style="left:241.70000000000002px;top:216px;font-size:11px;color:#333;line-height:14px;height:14px;letter-spacing:-0.247px;">6190.1 ms</div>
<div class="t" style="left:316.70000000000005px;top:216px;font-size:11px;color:#333;line-height:14px;height:14px;letter-spacing:-0.247px;">6190.2 ms</div>
<div class="t" style="left:390.70000000000005px;top:216px;font-size:11px;color:#333;line-height:14px;height:14px;letter-spacing:-0.247px;">6190.3 ms</div>
<div class="t" style="left:465.70000000000005px;top:216px;font-size:11px;color:#333;line-height:14px;height:14px;letter-spacing:-0.247px;">6190.4 ms</div>
<div class="t" style="left:540.7px;top:216px;font-size:11px;color:#333;line-height:14px;height:14px;letter-spacing:-0.247px;">6190.5 ms</div>
<div class="t" style="left:614.7px;top:216px;font-size:11px;color:#333;line-height:14px;height:14px;letter-spacing:-0.247px;">6190.6 ms</div>
<div class="t" style="left:689.7px;top:216px;font-size:11px;color:#333;line-height:14px;height:14px;letter-spacing:-0.247px;">6190.7 ms</div>
<div class="t" style="left:763.7px;top:216px;font-size:11px;color:#333;line-height:14px;height:14px;letter-spacing:-0.247px;">6190.8 ms</div>
<div class="t" style="left:838.7px;top:216px;font-size:11px;color:#333;line-height:14px;height:14px;letter-spacing:-0.247px;">6190.9 ms</div>
<div class="t" style="left:912.7px;top:216px;font-size:11px;color:#333;line-height:14px;height:14px;letter-spacing:-0.247px;">6191.0 ms</div>
<div class="t" style="left:987.6999999999999px;top:216px;font-size:11px;color:#333;line-height:14px;height:14px;letter-spacing:-0.247px;">6191.1 ms</div>
<div class="t" style="left:1061.6999999999998px;top:216px;font-size:11px;color:#333;line-height:14px;height:14px;letter-spacing:-0.247px;">6191.2 ms</div>
<div class="t" style="left:1136.6999999999998px;top:216px;font-size:11px;color:#333;line-height:14px;height:14px;letter-spacing:-0.247px;">6191.3 ms</div>
<div class="t" style="left:1211.6999999999998px;top:216px;font-size:11px;color:#333;line-height:14px;height:14px;letter-spacing:-0.247px;">6191.4 ms</div>
<div class="t" style="left:1285.6999999999998px;top:216px;font-size:11px;color:#333;line-height:14px;height:14px;letter-spacing:-0.247px;">6191.5 ms</div>
<div class="t" style="left:657px;top:234px;font-size:11px;color:#333;line-height:14px;height:14px;letter-spacing:-0.190px;">47.1 ms</div>
<div class="t" style="left:4px;top:251px;font-size:11px;color:#333;line-height:14px;height:14px;letter-spacing:0.044px;">Main Thread</div>
<div class="t" style="left:4px;top:268px;font-size:11px;color:#333;line-height:14px;height:14px;letter-spacing:0.138px;">Parse HTML (http2.akamai.com/demo/h2_demo_frame.html [1…170])</div>
<div class="t" style="left:4px;top:285px;font-size:11px;color:#333;line-height:14px;height:14px;letter-spacing:0.161px;">Evaluate Script (http2.akamai.com/demo/h2_demo_frame.html:158)</div>
<div class="t" style="left:13px;top:302px;font-size:11px;color:#333;line-height:14px;height:14px;letter-spacing:-0.700px;">R…</div>
<div class="t" style="left:131px;top:302px;font-size:11px;color:#333;line-height:14px;height:14px;letter-spacing:0.062px;">Event (load)</div>
<div class="t" style="left:333px;top:319px;font-size:11px;color:#333;line-height:14px;height:14px;letter-spacing:0.066px;">Function Call</div>
<div class="t" style="left:933px;top:336px;font-size:11px;color:#333;line-height:14px;height:14px;letter-spacing:-0.112px;">Send Reque…sb.min.js)</div>
<div class="t" style="left:1303px;top:268px;font-size:11px;color:#333;line-height:14px;height:14px;letter-spacing:-0.247px;">Sen…ng)</div>
<div class="a" style="left:1351px;top:215px;width:15px;height:200px;background:#f1f1f1"></div>
<div class="a" style="left:1353px;top:229px;width:11px;height:96px;background:#c1c1c1;border:1px solid #a9a9a9"></div>
<svg style="left:1354px;top:219px" width="9" height="6" viewBox="0 0 9 6"><path d="M0.5 5.5L4.5 1.5L8.5 5.5Z" fill="#a3a3a3"/></svg>
<svg style="left:1354px;top:404px" width="9" height="6" viewBox="0 0 9 6"><path d="M0.5 0.5L4.5 5.2L8.5 0.5Z" fill="#505050"/></svg>
<div class="a" style="left:0;top:415px;width:1366px;height:1px;background:#aaa"></div>
<div class="a" style="left:0;top:416px;width:199px;height:132px;background:#eee"></div>
<div class="a" style="left:199px;top:416px;width:1px;height:132px;background:#aaa"></div>
<div class="a" style="left:200px;top:416px;width:1166px;height:132px;background:#fff"></div>
<div class="t" style="left:5px;top:422px;color:#5a6b80;line-height:14px;height:14px;letter-spacing:-0.359px;">MEMORY</div>
<div class="a" style="left:11px;top:445px;width:12px;height:12px;border:1px solid #3f6fc0;border-radius:3px;background:#6b97e0"></div>
<svg style="left:11px;top:445px" width="12" height="12" viewBox="0 0 12 12"><path d="M2 5.8L5 9L10.3 1.6" fill="none" stroke="#1a1a1a" stroke-width="1.7"/></svg>
<div class="t" style="left:28px;top:445px;color:#333;line-height:14px;height:14px;letter-spacing:-0.505px;">JS Heap</div>
<div class="t" style="left:77px;top:445px;color:#333;line-height:14px;height:14px;letter-spacing:-0.093px;">[19.8 MB – 20.8 MB]</div>
<div class="a" style="left:11px;top:465px;width:12px;height:12px;border:1px solid #b04545;border-radius:3px;background:#e06c6c"></div>
<svg style="left:11px;top:465px" width="12" height="12" viewBox="0 0 12 12"><path d="M2 5.8L5 9L10.3 1.6" fill="none" stroke="#1a1a1a" stroke-width="1.7"/></svg>
<div class="t" style="left:28px;top:465px;color:#333;line-height:14px;height:14px;letter-spacing:0.037px;">Documents</div>
<div class="t" style="left:95px;top:465px;color:#333;line-height:14px;height:14px;letter-spacing:-0.167px;">[6 – 7]</div>
<div class="a" style="left:11px;top:485px;width:12px;height:12px;border:1px solid #3f9a3f;border-radius:3px;background:#6fd66f"></div>
<svg style="left:11px;top:485px" width="12" height="12" viewBox="0 0 12 12"><path d="M2 5.8L5 9L10.3 1.6" fill="none" stroke="#1a1a1a" stroke-width="1.7"/></svg>
<div class="t" style="left:28px;top:485px;color:#333;line-height:14px;height:14px;letter-spacing:-0.172px;">Nodes</div>
<div class="t" style="left:68px;top:485px;color:#333;line-height:14px;height:14px;letter-spacing:-0.025px;">[1 005 – 1 315]</div>
<div class="a" style="left:11px;top:505px;width:12px;height:12px;border:1px solid #b27f35;border-radius:3px;background:#e8b268"></div>
<svg style="left:11px;top:505px" width="12" height="12" viewBox="0 0 12 12"><path d="M2 5.8L5 9L10.3 1.6" fill="none" stroke="#1a1a1a" stroke-width="1.7"/></svg>
<div class="t" style="left:28px;top:505px;color:#333;line-height:14px;height:14px;letter-spacing:0.037px;">Listeners</div>
<div class="t" style="left:83px;top:505px;color:#333;line-height:14px;height:14px;letter-spacing:-0.120px;">[385 – 515]</div>
<div class="a" style="left:200px;top:433px;width:1166px;height:1px;background:#ddd"></div>
<svg style="left:200px;top:416px" width="1166" height="132" viewBox="200 416 1166 132">
<rect x="275" y="433" width="1" height="115" fill="#e2e2e2"/>
<rect x="400" y="433" width="1" height="115" fill="#e2e2e2"/>
<rect x="525" y="433" width="1" height="115" fill="#e2e2e2"/>
<rect x="650" y="433" width="1" height="115" fill="#e2e2e2"/>
<rect x="775" y="433" width="1" height="115" fill="#e2e2e2"/>
<rect x="901" y="433" width="1" height="115" fill="#e2e2e2"/>
<rect x="1026" y="433" width="1" height="115" fill="#e2e2e2"/>
<rect x="1151" y="433" width="1" height="115" fill="#e2e2e2"/>
<rect x="1276" y="433" width="1" height="115" fill="#e2e2e2"/>
<path d="M200 444.5H1366" stroke="#e02020" stroke-width="1.2" fill="none"/>
<path d="M200 538.3H1132.5V492.2H1172V491.5H1366" stroke="#1f52d2" stroke-width="1.25" fill="none"/>
<path d="M200 538.3H1211.5V535.6H1366" stroke="#2fd02f" stroke-width="1.2" fill="none"/>
<path d="M200 538.3H1366" stroke="#e89820" stroke-width="1.2" fill="none"/>
</svg>
<div class="a" style="left:0;top:548px;width:1366px;height:1px;background:#aaa"></div>
<div class="a" style="left:0;top:549px;width:1366px;height:27px;background:#f3f3f3;border-bottom:1px solid #ccc"></div>
<div class="a" style="left:124px;top:551px;width:71px;height:24px;background:#fff;border:1px solid #ccc"></div>
<div class="t" style="left:10px;top:557px;color:#5a5a5a;line-height:14px;height:14px;letter-spacing:-0.224px;">Summary</div>
<div class="t" style="left:71px;top:557px;color:#5a5a5a;line-height:14px;height:14px;letter-spacing:-0.129px;">Call Tree</div>
<div class="t" style="left:129px;top:557px;color:#333;line-height:14px;height:14px;letter-spacing:0.330px;">Bottom-Up</div>
<div class="a" style="left:0;top:576px;width:1366px;height:26px;background:#fff"></div>
<div class="t" style="left:11px;top:583px;color:#333;line-height:14px;height:14px;letter-spacing:0.038px;">Group by Category</div>
<svg style="left:136px;top:586px" width="8" height="7" viewBox="0 0 8 7"><path d="M0 0H8L4 6.6Z" fill="#333"/></svg>
<div class="a" style="left:0;top:602px;width:1366px;height:17px;background:#eee;border-bottom:1px solid #aaa"></div>
<div class="t" style="left:4px;top:603px;color:#333;line-height:14px;height:14px;letter-spacing:-0.464px;">Self Time</div>
<div class="t" style="left:125px;top:603px;color:#333;line-height:14px;height:14px;letter-spacing:-0.188px;">Total Time</div>
<div class="t" style="left:245px;top:603px;color:#333;line-height:14px;height:14px;letter-spacing:-0.145px;">Activity</div>
<svg style="left:108px;top:607px" width="8" height="7" viewBox="0 0 8 7"><path d="M0 0H8L4 6.6Z" fill="#666"/></svg>
<div class="a" style="left:0;top:619px;width:1366px;height:82px;background:#fff"></div>
<div class="a" style="left:120px;top:602px;width:1px;height:99px;background:#aaa"></div>
<div class="a" style="left:240px;top:602px;width:1px;height:99px;background:#aaa"></div>
<div class="a" style="left:3px;top:620px;width:117px;height:15px;background:#fdf4de;border-bottom:1.5px solid #efc457"></div>
<div class="a" style="left:124px;top:620px;width:116px;height:15px;background:#fdf4de;border-bottom:1.5px solid #efc457"></div>
<div class="t" style="left:36.5px;top:620px;font-size:11px;color:#333;line-height:14px;height:14px;letter-spacing:-0.403px;">0.2 ms</div>
<div class="t" style="left:71px;top:620px;font-size:11px;color:#999;line-height:14px;height:14px;letter-spacing:-0.283px;">100.00 %</div>
<div class="t" style="left:156.5px;top:620px;font-size:11px;color:#333;line-height:14px;height:14px;letter-spacing:-0.403px;">0.2 ms</div>
<div class="t" style="left:191px;top:620px;font-size:11px;color:#999;line-height:14px;height:14px;letter-spacing:-0.283px;">100.00 %</div>
<svg style="left:246px;top:622px" width="7" height="9" viewBox="0 0 7 9"><path d="M0 0.3L6.6 4.5L0 8.7Z" fill="#6e6e6e"/></svg>
<div class="a" style="left:257px;top:622px;width:10px;height:10px;background:#6d9fe3"></div>
<div class="t" style="left:271px;top:620px;color:#333;line-height:14px;height:14px;letter-spacing:-0.620px;">Loading</div>
<div class="a" style="left:1351px;top:618px;width:15px;height:83px;background:#f1f1f1"></div>
<svg style="left:1354px;top:624px" width="9" height="6" viewBox="0 0 9 6"><path d="M0.5 5.5L4.5 1.5L8.5 5.5Z" fill="#a3a3a3"/></svg>
<svg style="left:1354px;top:691.5px" width="9" height="6" viewBox="0 0 9 6"><path d="M0.5 0.5L4.5 4.5L8.5 0.5Z" fill="#a3a3a3"/></svg>
<div class="a" style="left:0;top:701px;width:1366px;height:1px;background:#aaa"></div>
<div class="a" style="left:0;top:702px;width:1366px;height:27px;background:#f3f3f3;border-bottom:1px solid #ccc"></div>
<div class="a" style="left:31px;top:704px;width:54px;height:24px;background:#fff;border:1px solid #ccc"></div>
<svg style="left:14.5px;top:708px" width="4" height="14" viewBox="0 0 4 14"><circle cx="2" cy="2" r="1.45" fill="#555"/><circle cx="2" cy="7" r="1.45" fill="#555"/><circle cx="2" cy="12" r="1.45" fill="#555"/></svg>
<div class="t" style="left:36px;top:710px;color:#333;line-height:14px;height:14px;letter-spacing:-0.172px;">Console</div>
<div class="a" style="left:0;top:729px;width:1366px;height:27px;background:#fff;border-bottom:1px solid #ddd"></div>
<svg style="left:0;top:729px" width="60" height="26" viewBox="0 729 60 26"><circle cx="16.4" cy="742.3" r="5.5" fill="none" stroke="#444" stroke-width="2"/><path d="M12.5 738.4L20.3 746.2" stroke="#444" stroke-width="2"/><path d="M38 737.8H50.5L46 743.6V748.4H42.5V743.6Z" fill="#b4b4b4" stroke="#3a3a3a" stroke-width="1.1" stroke-linejoin="round"/><path d="M38.5 738.2H50" stroke="#3a3a3a" stroke-width="1.4"/></svg>
<div class="t" style="left:67px;top:736px;color:#333;line-height:14px;height:14px;letter-spacing:0.228px;">&lt;top frame&gt;</div>
<svg style="left:146px;top:739px" width="8" height="7" viewBox="0 0 8 7"><path d="M0 0H8L4 6.6Z" fill="#333"/></svg>
<svg style="left:168.4px;top:736.3px" width="11.5" height="12.5" viewBox="0 0 11.5 12.5"><rect x="0.5" y="1.2" width="9.9" height="9.9" rx="2.2" fill="#c8c8c8" opacity="0.5"/><rect x="0.5" y="0.5" width="9.9" height="9.9" rx="2.2" fill="url(#cbg)" stroke="#9c9c9c" stroke-width="1"/></svg>
<div class="t" style="left:183px;top:736px;color:#333;line-height:14px;height:14px;letter-spacing:-0.034px;">Preserve log</div>
<div class="a" style="left:0;top:756px;width:1366px;height:12px;background:#fff"></div>
<svg style="left:9.6px;top:762px" width="6" height="8" viewBox="0 0 6 8"><path d="M1 0.8L4.6 4.4L1 8" fill="none" stroke="#2f7bf5" stroke-width="1.6"/></svg>
<div class="a" style="left:1351px;top:756px;width:15px;height:12px;background:#f1f1f1"></div>
<svg style="left:1354px;top:758px" width="9" height="11" viewBox="0 0 9 11"><path d="M0.5 4.6L4.5 0.3L8.5 4.6ZM0.5 6.4L4.5 10.7L8.5 6.4Z" fill="#444"/></svg>
<div class="a" style="left:0;top:731px;width:4px;height:37px;background:#353535;border-right:1px solid #0a0a0a;border-top:1px solid #0a0a0a;border-radius:0 3px 0 0"></div>
</body></html>
